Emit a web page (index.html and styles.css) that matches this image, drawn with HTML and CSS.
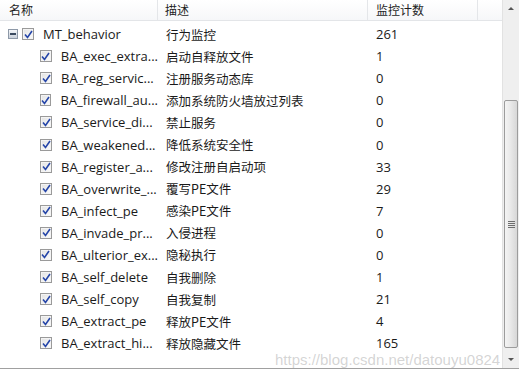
FILE: index.html
```html
<!DOCTYPE html>
<html lang="zh-CN">
<head>
    <meta charset="UTF-8">
    <title>监控</title>
    <link rel="stylesheet" href="styles.css">
</head>
<body>
    <div class="view">
        <div class="list">
            <div class="header">
                <div class="col name">名称</div>
                <div class="col desc">描述</div>
                <div class="col count">监控计数</div>
                <div class="col rest"></div>
            </div>

            <div class="rows">
                <div class="row root">
                    <div class="col name">
                        <span class="expander"><span class="minus"></span></span>
                        <span class="check"><svg width="9" height="9" viewBox="0 0 9 9"><path d="M1 4.5 L3.5 7.5 L8 1" fill="none" stroke="#2545a8" stroke-width="1.6"/></svg></span>
                        <span class="label">MT_behavior</span>
                    </div>
                    <div class="col desc">行为监控</div>
                    <div class="col count">261</div>
                </div>
            </div>
        </div>

        <div class="scrollbar">
            <div class="arrow up"></div>
            <div class="track">
                <div class="thumb"><span class="grip"></span></div>
            </div>
            <div class="arrow down"></div>
        </div>

        <div class="watermark">https://blog.csdn.net/datouyu0824</div>
    </div>

    <script>
        const items = [
            ["BA_exec_extra...", "启动自释放文件", 1],
            ["BA_reg_servic...", "注册服务动态库", 0],
            ["BA_firewall_au...", "添加系统防火墙放过列表", 0],
            ["BA_service_di...", "禁止服务", 0],
            ["BA_weakened...", "降低系统安全性", 0],
            ["BA_register_a...", "修改注册自启动项", 33],
            ["BA_overwrite_...", "覆写PE文件", 29],
            ["BA_infect_pe", "感染PE文件", 7],
            ["BA_invade_pr...", "入侵进程", 0],
            ["BA_ulterior_ex...", "隐秘执行", 0],
            ["BA_self_delete", "自我删除", 1],
            ["BA_self_copy", "自我复制", 21],
            ["BA_extract_pe", "释放PE文件", 4],
            ["BA_extract_hi...", "释放隐藏文件", 165]
        ];

        const rows = document.querySelector(".rows");
        const tick = document.querySelector(".root .check").innerHTML;

        items.forEach(([name, desc, count]) => {
            const row = document.createElement("div");
            row.className = "row child";
            row.innerHTML =
                `<div class="col name"><span class="check">${tick}</span><span class="label">${name}</span></div>` +
                `<div class="col desc">${desc}</div>` +
                `<div class="col count">${count}</div>`;
            rows.appendChild(row);
        });
    </script>
</body>
</html>
```

FILE: styles.css
```css
* {
    margin: 0;
    padding: 0;
    box-sizing: border-box;
}

body {
    width: 520px;
    height: 376px;
    overflow: hidden;
    background: #fff;
    font-family: "Open Sans", "Noto Sans CJK SC", sans-serif;
    font-size: 13px;
    color: #1a1a1a;
}

.view {
    position: relative;
    display: grid;
    grid-template-columns: 1fr 17px;
    height: 369px;
    width: 519px;
    border-bottom: 1px solid #a0a0a0;
}

.header {
    display: flex;
    height: 21px;
    background: linear-gradient(#ffffff, #f6f7f9);
    border-bottom: 1px solid #e3e5e8;
}

.header .col {
    line-height: 20px;
    font-family: "Noto Sans CJK SC", sans-serif;
    font-size: 12px;
    color: #1e1e1e;
    border-right: 1px solid #e4e6e9;
}

.col.name {
    width: 158px;
    padding-left: 9px;
}

.col.desc {
    width: 210px;
    padding-left: 7px;
}

.col.count {
    width: 110px;
    padding-left: 8px;
}

.col.rest {
    flex: 1;
    border-right: none;
}

.rows {
    padding-top: 2px;
}

.row {
    display: flex;
    height: 22.1px;
    align-items: center;
}

.row .col {
    white-space: nowrap;
    overflow: hidden;
}

.row .desc {
    font-family: "Noto Sans CJK SC", sans-serif;
    font-size: 12.5px;
    padding-left: 8px;
}

.row .count {
    padding-left: 8px;
}

.row .name {
    display: flex;
    align-items: center;
}

.row.root .name {
    padding-left: 8px;
}

.row.child .name {
    padding-left: 40px;
}

.expander {
    display: inline-flex;
    align-items: center;
    justify-content: center;
    width: 10px;
    height: 10px;
    margin-right: 4px;
    border: 1px solid #8e99a8;
    background: linear-gradient(#f4f6f9, #c9d0da);
}

.minus {
    width: 6px;
    height: 2px;
    background: #3b4a60;
}

.check {
    display: inline-flex;
    align-items: center;
    justify-content: center;
    width: 12px;
    height: 12px;
    border: 1px solid #9a9a9a;
    background: linear-gradient(135deg, #e2e2e2, #fcfcfc);
    box-shadow: inset 0 0 0 1px #f4f4f4;
}

.label {
    margin-left: 9px;
}

.scrollbar {
    display: flex;
    flex-direction: column;
    background: #efefef;
    border-left: 1px solid #e2e2e2;
}

.arrow {
    height: 17px;
    display: flex;
    justify-content: center;
    align-items: center;
}

.arrow.up::after,
.arrow.down::after {
    content: "";
    border-left: 3px solid transparent;
    border-right: 3px solid transparent;
}

.arrow.up::after {
    border-bottom: 3px solid #555;
}

.arrow.down::after {
    border-top: 3px solid #555;
}

.track {
    flex: 1;
    display: flex;
    flex-direction: column;
    justify-content: flex-end;
    padding: 0 1px 3px;
}

.thumb {
    height: 248px;
    border: 1px solid #9c9c9c;
    border-radius: 2px;
    background: linear-gradient(90deg, #f4f4f4, #e9e9e9 45%, #d7d7d7);
    display: flex;
    align-items: center;
    justify-content: center;
}

.grip {
    width: 7px;
    height: 7px;
    background: repeating-linear-gradient(#6d6d6d 0 1px, transparent 1px 2px);
}

.watermark {
    position: absolute;
    left: 275px;
    top: 352px;
    font-family: "Liberation Sans", sans-serif;
    font-size: 15px;
    line-height: 16px;
    color: rgba(160, 160, 160, 0.45);
    white-space: nowrap;
}
```
